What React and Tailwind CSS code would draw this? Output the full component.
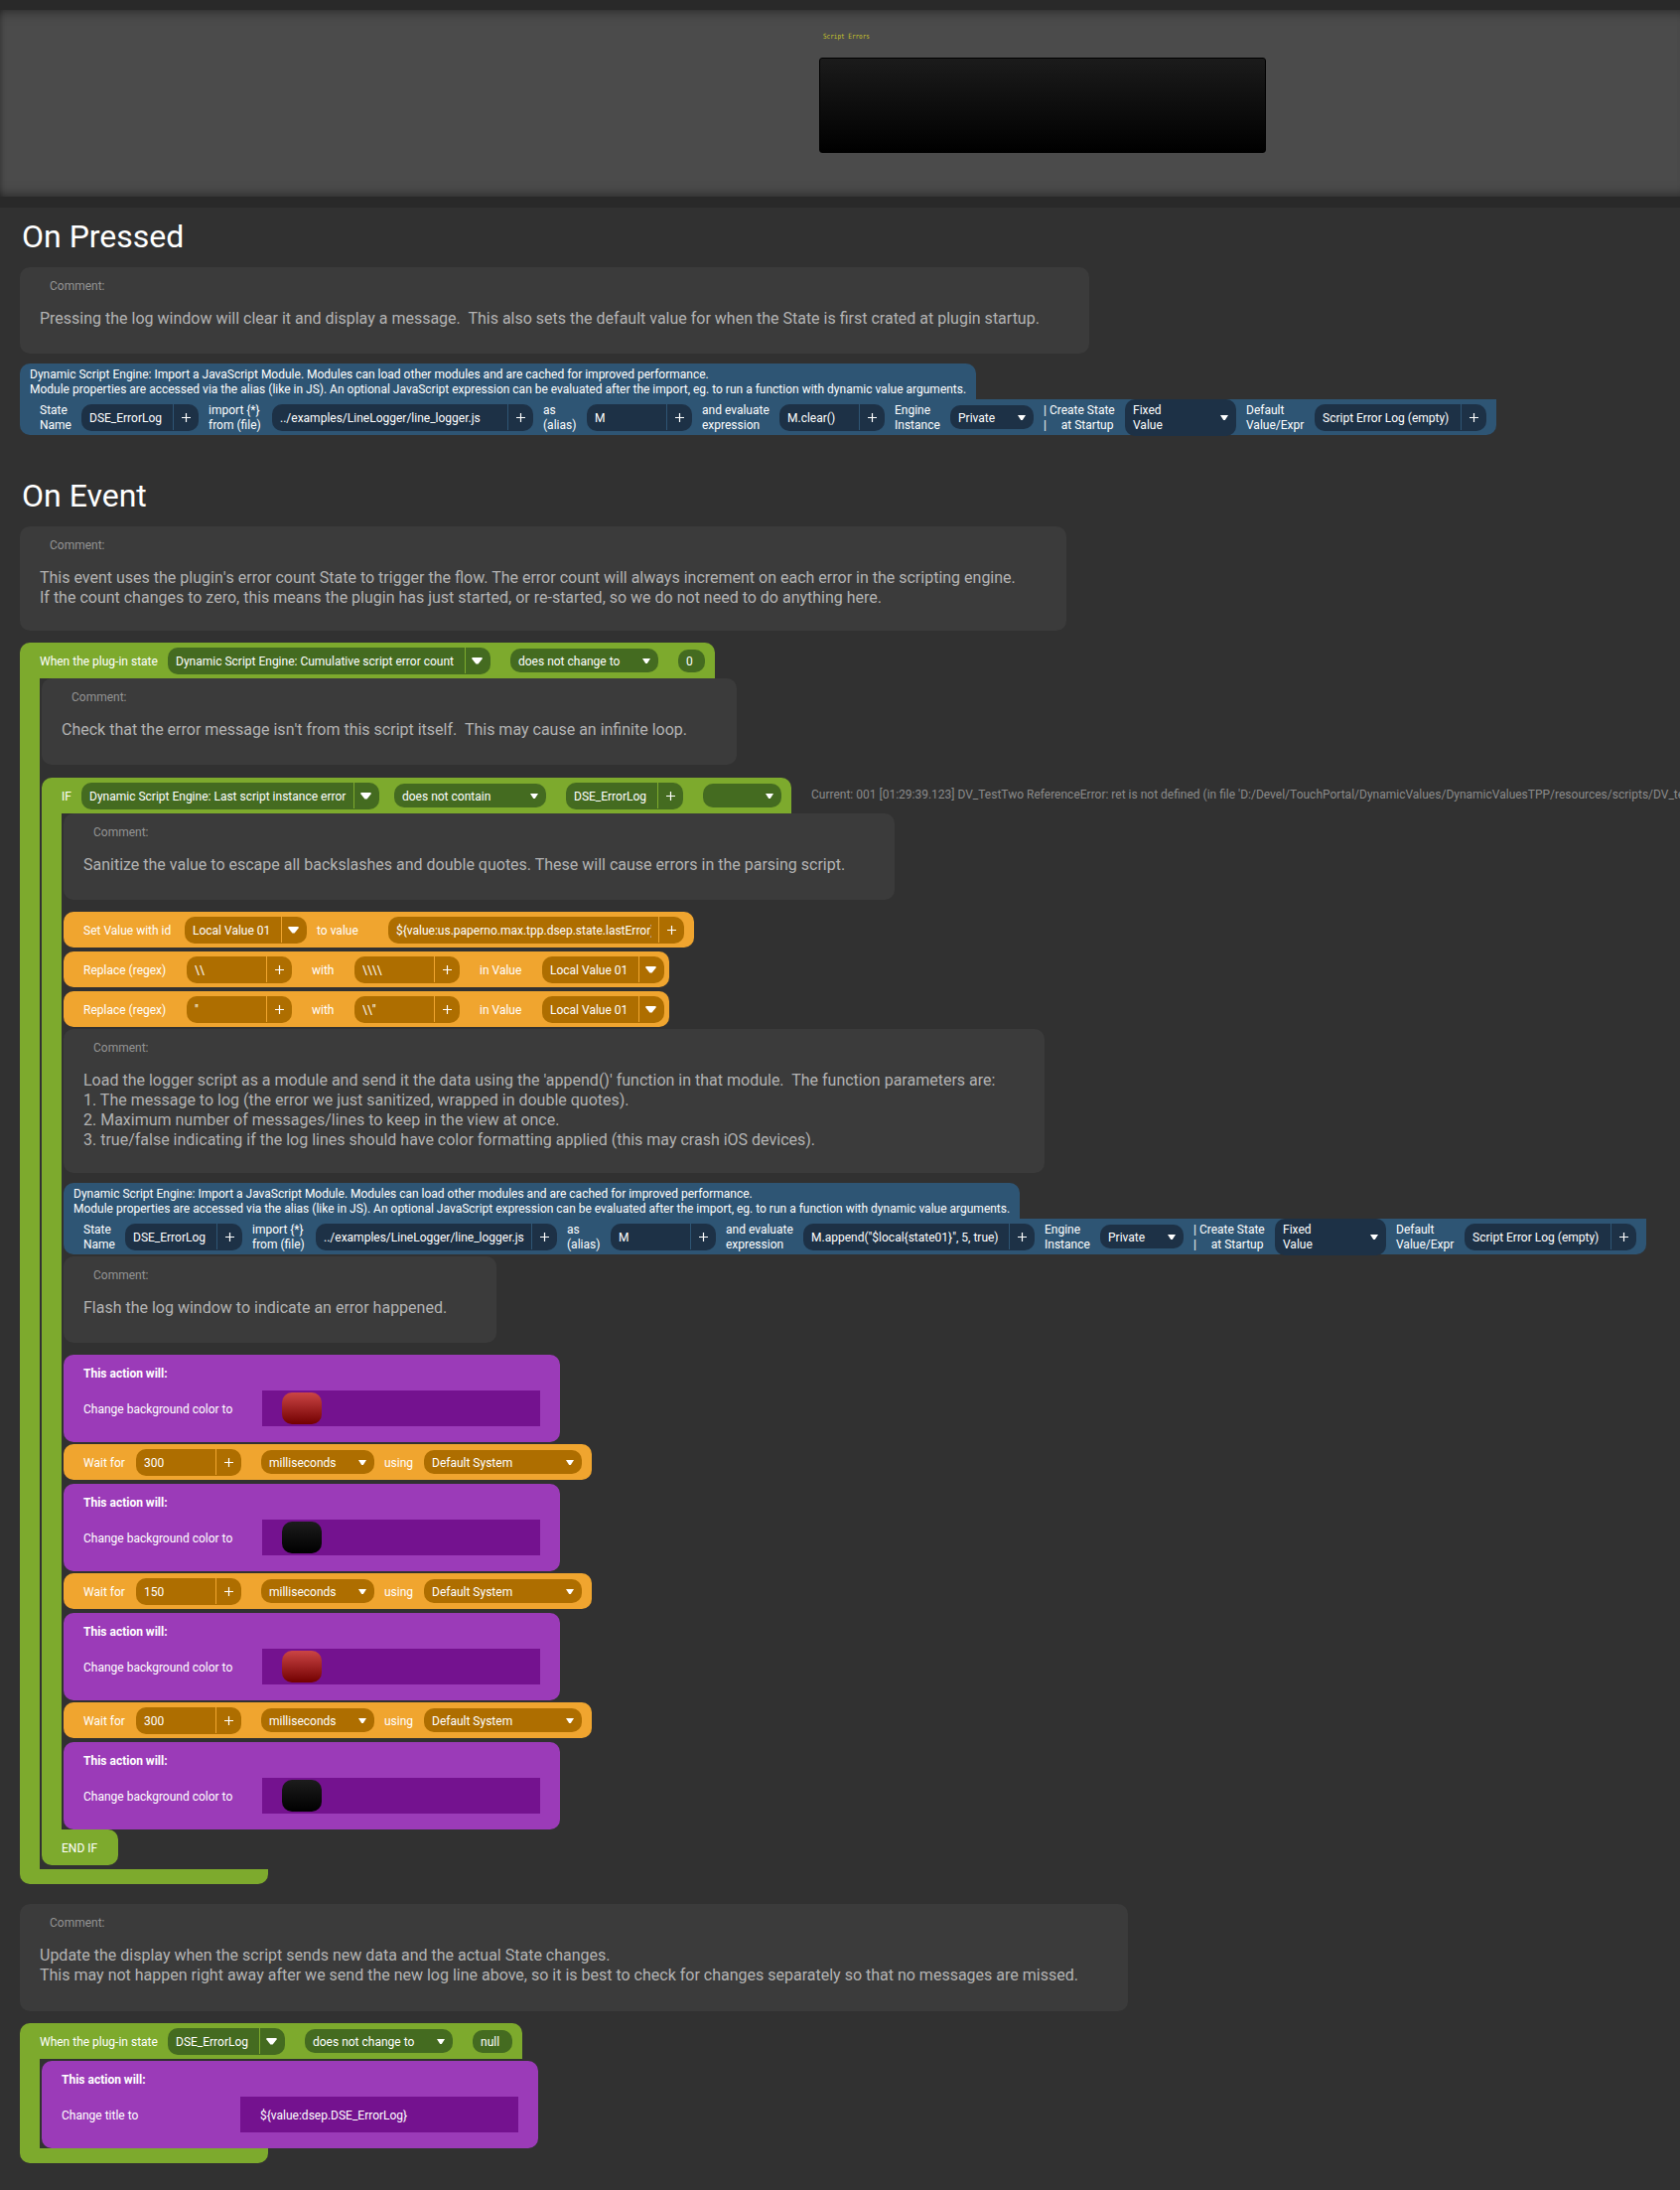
import React from "react";

const TONES = {
  blue: { block: "bg-[#2e5574]", pill: "bg-[#1d3146]", line: "bg-[#2e5574]" },
  green: { block: "bg-[#7daa2d]", pill: "bg-[#446b20]", line: "bg-[#7daa2d]" },
  orange: { block: "bg-[#f0a52f]", pill: "bg-[#ae6e00]", line: "bg-[#f0a52f]" },
};

function Arrow({ big }) {
  return big ? (
    <svg className="mr-0.5 block h-[7px] w-[11px]" viewBox="0 0 11 7"><path d="M.8 0h9.4l.8.9L6.6 6.6H4.4L0 .9z" fill="#fff" /></svg>
  ) : (
    <svg className="block h-[5px] w-2" viewBox="0 0 8 5"><path d="M0 0h8L4.8 5H3.2z" fill="#fff" /></svg>
  );
}

function Plus() {
  return (
    <svg className="block h-[9px] w-[9px]" viewBox="0 0 9 9"><path d="M4.5 0v9M0 4.5h9" stroke="#fff" strokeWidth="1.2" /></svg>
  );
}

/* Text field with a divider and a trailing "+" or list arrow */
function Field({ tone, w, ml = 0, icon = "plus", children }) {
  const t = TONES[tone];
  return (
    <div className={`flex h-[27px] shrink-0 items-center rounded-[10px] pl-2 ${t.pill}`} style={{ width: w, marginLeft: ml }}>
      <div className="mr-[7px] min-w-0 flex-1 overflow-hidden whitespace-pre pt-0.5">{children}</div>
      <div className={`h-[26px] w-px ${t.line}`} />
      <div className="flex w-[25px] justify-center">{icon === "plus" ? <Plus /> : <Arrow big />}</div>
    </div>
  );
}

function Select({ tone, w, ml = 0, tall, children }) {
  const t = TONES[tone];
  return (
    <div
      className={`flex shrink-0 items-center justify-between rounded-[10px] px-2 ${t.pill} ${tall ? "h-[37px] leading-[15px]" : "h-6"}`}
      style={{ width: w, marginLeft: ml }}
    >
      <div className="whitespace-pre pt-0.5">{children}</div>
      <Arrow />
    </div>
  );
}

function Value({ w, ml = 0, children }) {
  return (
    <div className="flex h-[23px] shrink-0 items-center rounded-[10px] bg-[#446b20] pl-2 pt-0.5" style={{ width: w, marginLeft: ml }}>
      {children}
    </div>
  );
}

function Label({ w, ml = 0, children }) {
  return <div className="shrink-0 whitespace-pre pt-0.5 leading-[15px]" style={{ width: w, marginLeft: ml }}>{children}</div>;
}

function Comment({ w, h = 87, mt = 0, children }) {
  return (
    <div className="rounded-[10px] bg-[#3b3b3b] pl-5 pt-3" style={{ width: w, height: h, marginTop: mt }}>
      <div className="ml-[10px] h-[30px] leading-[15px] text-[#949494]">Comment:</div>
      <div className="whitespace-pre text-[16px] leading-5 text-[#b3b3b3]">{children}</div>
    </div>
  );
}

/* Contraction set without kerning around the straight apostrophe */
function Unkerned({ children }) {
  return <span className="[font-kerning:none]">{children}</span>;
}

function ImportModule({ mt, topW, w, fileW, expr, exprW }) {
  return (
    <div style={{ marginTop: mt, width: w }}>
      <div className="h-9 whitespace-pre rounded-t-[10px] bg-[#2e5574] pl-[10px] pt-1 leading-[15px]" style={{ width: topW }}>
        {"Dynamic Script Engine: Import a JavaScript Module. Modules can load other modules and are cached for improved performance.\nModule properties are accessed via the alias (like in JS). An optional JavaScript expression can be evaluated after the import, eg. to run a function with dynamic value arguments."}
      </div>
      <div className="flex h-9 items-center rounded-b-[10px] bg-[#2e5574] pl-5">
        <Label w={42}>{"State\nName"}</Label>
        <Field tone="blue" w={118}>DSE_ErrorLog</Field>
        <Label w={54} ml={10}>{"import {*}\nfrom (file)"}</Label>
        <Field tone="blue" w={fileW} ml={10}>../examples/LineLogger/line_logger.js</Field>
        <Label w={34} ml={10}>{"as\n(alias)"}</Label>
        <Field tone="blue" w={106} ml={10}>M</Field>
        <Label w={68} ml={10}>{"and evaluate\nexpression"}</Label>
        <Field tone="blue" w={exprW} ml={10}>{expr}</Field>
        <Label w={46} ml={10}>{"Engine\nInstance"}</Label>
        <Select tone="blue" w={84} ml={10}>Private</Select>
        <Label w={72} ml={10}>{"| Create State\n|     at Startup"}</Label>
        <Select tone="blue" w={112} ml={10} tall>{"Fixed\nValue"}</Select>
        <Label w={59} ml={10}>{"Default\nValue/Expr"}</Label>
        <Field tone="blue" w={173} ml={10}>Script Error Log (empty)</Field>
      </div>
    </div>
  );
}

function Action({ mt = 0, label, children }) {
  return (
    <div className="h-[88px] w-[500px] rounded-[10px] bg-[#9b3bb8] pl-5" style={{ marginTop: mt }}>
      <div className="h-9 pt-3 font-bold leading-[15px]">This action will:</div>
      <div className="flex h-9 items-center">
        <div className="w-[180px] pt-0.5">{label}</div>
        <div className="flex h-9 w-[280px] items-center bg-[#74128f] pl-5">{children}</div>
      </div>
    </div>
  );
}

function ColorAction({ mt, red }) {
  return (
    <Action mt={mt} label="Change background color to">
      <div
        className={`h-8 w-10 rounded-[10px] ${red ? "bg-[linear-gradient(#cb4545,#720000)]" : "bg-[linear-gradient(#1c1c1c,#000000)]"}`}
      />
    </Action>
  );
}

function OrangeRow({ w, mt = 4, children }) {
  return (
    <div className="flex h-9 items-center rounded-[10px] bg-[#f0a52f] pl-5" style={{ width: w, marginTop: mt }}>
      {children}
    </div>
  );
}

function Wait({ ms }) {
  return (
    <OrangeRow w={532} mt={2}>
      <Label w={43}>Wait for</Label>
      <Field tone="orange" w={106} ml={10}>{ms}</Field>
      <Select tone="orange" w={114} ml={20}>milliseconds</Select>
      <Label w={30} ml={10}>using</Label>
      <Select tone="orange" w={159} ml={10}>Default System</Select>
    </OrangeRow>
  );
}

function Replace({ from, to }) {
  return (
    <OrangeRow w={610}>
      <Label w={104}>Replace (regex)</Label>
      <Field tone="orange" w={106}>{from}</Field>
      <Label w={23} ml={20}>with</Label>
      <Field tone="orange" w={106} ml={20}>{to}</Field>
      <Label w={43} ml={20}>in Value</Label>
      <Field tone="orange" w={123} ml={20} icon="arrow">Local Value 01</Field>
    </OrangeRow>
  );
}

export default function App() {
  return (
    <div className="h-[2205px] w-[1692px] overflow-hidden bg-[#313131] font-['Roboto',sans-serif] text-[12px] leading-[15px] text-white">
      <div className="h-[10px] bg-[#292929]" />
      <div className="h-[188px] overflow-hidden bg-[#4b4b4b] shadow-[inset_0_13px_13px_-13px_rgba(0,0,0,0.55),inset_0_-13px_13px_-13px_rgba(0,0,0,0.55),inset_6px_0_6px_-6px_rgba(0,0,0,0.35)]">
        <div className="ml-[829px] h-12 pt-[23px]">
          <div className="origin-bottom scale-y-120 font-['DejaVu_Sans_Mono',monospace] text-[6px] leading-[8px] text-[#c9c32c]">Script Errors</div>
        </div>
        <div className="ml-[825px] h-24 w-[450px] rounded-[3px] border border-black bg-[linear-gradient(#1b1b1b,#000000)]" />
      </div>
      <div className="h-[11px] bg-[#292929]" />

      <div className="pl-5">
        <h1 className="ml-0.5 h-[60px] pt-[9px] text-[32px] leading-[40px]">On Pressed</h1>
        <Comment w={1077}>{"Pressing the log window will clear it and display a message.  This also sets the default value for when the State is first crated at plugin startup."}</Comment>
        <ImportModule mt={10} topW={963} w={1487} fileW={263} expr="M.clear()" exprW={106} />

        <h1 className="ml-0.5 mt-8 h-[60px] pt-[9px] text-[32px] leading-[40px]">On Event</h1>
        <Comment w={1054} h={105}>
          {"This event uses the plugi"}<Unkerned>n's</Unkerned>{" error count State to trigger the flow. The error count will always increment on each error in the scripting engine.\nIf the count changes to zero, this means the plugin has just started, or re-started, so we do not need to do anything here."}
        </Comment>

        <div className="mt-3">
          <div className="flex h-9 w-[700px] items-center rounded-t-[10px] bg-[#7daa2d] pl-5">
            <Label w={129}>When the plug-in state</Label>
            <Field tone="green" w={325} icon="arrow">Dynamic Script Engine: Cumulative script error count</Field>
            <Select tone="green" w={149} ml={20}>does not change to</Select>
            <Value w={27} ml={20}>0</Value>
          </div>
          <div className="flex">
            <div className="w-5 shrink-0 bg-[#7daa2d]" />
            <div className="ml-0.5 pb-1">
              <Comment w={700}>
                {"Check that the error message is"}<Unkerned>n't</Unkerned>{" from this script itself.  This may cause an infinite loop."}
              </Comment>
              <div className="mt-[13px] flex items-center">
                <div className="flex h-9 w-[755px] shrink-0 items-center rounded-t-[10px] bg-[#7daa2d] pl-5">
                  <Label w={20}>IF</Label>
                  <Field tone="green" w={300} icon="arrow">Dynamic Script Engine: Last script instance error</Field>
                  <Select tone="green" w={153} ml={15}>does not contain</Select>
                  <Field tone="green" w={118} ml={20}>DSE_ErrorLog</Field>
                  <Select tone="green" w={79} ml={20}>{" "}</Select>
                </div>
                <div className="mb-px ml-5 w-[875px] overflow-hidden whitespace-pre text-[#8b8b8b]">
                  Current: 001 [01:29:39.123] DV_TestTwo ReferenceError: ret is not defined (in file 'D:/Devel/TouchPortal/DynamicValues/DynamicValuesTPP/resources/scripts/DV_test.js'
                </div>
              </div>
              <div className="flex">
                <div className="w-5 shrink-0 bg-[#7daa2d]" />
                <div className="ml-0.5">
                  <Comment w={837}>{"Sanitize the value to escape all backslashes and double quotes. These will cause errors in the parsing script."}</Comment>
                  <OrangeRow w={635} mt={12}>
                    <Label w={102}>Set Value with id</Label>
                    <Field tone="orange" w={123} icon="arrow">Local Value 01</Field>
                    <Label w={52} ml={10}>to value</Label>
                    <Field tone="orange" w={298} ml={20}>{"${value:us.paperno.max.tpp.dsep.state.lastError}"}</Field>
                  </OrangeRow>
                  <Replace from={"\\\\"} to={"\\\\\\\\"} />
                  <Replace from={'"'} to={'\\\\"'} />
                  <Comment w={988} h={145} mt={2}>{"Load the logger script as a module and send it the data using the 'append()' function in that module.  The function parameters are:\n1. The message to log (the error we just sanitized, wrapped in double quotes).\n2. Maximum number of messages/lines to keep in the view at once.\n3. true/false indicating if the log lines should have color formatting applied (this may crash iOS devices)."}</Comment>
                  <ImportModule mt={10} topW={963} w={1594} fileW={243} expr={'M.append("$local{state01}", 5, true)'} exprW={233} />
                  <Comment w={436} mt={2}>Flash the log window to indicate an error happened.</Comment>
                  <ColorAction mt={12} red />
                  <Wait ms="300" />
                  <ColorAction mt={4} />
                  <Wait ms="150" />
                  <ColorAction mt={4} red />
                  <Wait ms="300" />
                  <ColorAction mt={4} />
                </div>
              </div>
              <div className="flex h-9 w-[77px] items-center rounded-[10px] rounded-tl-none bg-[#7daa2d] pl-5 pt-0.5">END IF</div>
            </div>
          </div>
          <div className="h-[15px] w-[250px] rounded-b-[10px] bg-[#7daa2d]" />
        </div>

        <Comment w={1116} h={108} mt={20}>{"Update the display when the script sends new data and the actual State changes.\nThis may not happen right away after we send the new log line above, so it is best to check for changes separately so that no messages are missed."}</Comment>

        <div className="mt-3">
          <div className="flex h-9 w-[506px] items-center rounded-t-[10px] bg-[#7daa2d] pl-5">
            <Label w={129}>When the plug-in state</Label>
            <Field tone="green" w={118} icon="arrow">DSE_ErrorLog</Field>
            <Select tone="green" w={149} ml={20}>does not change to</Select>
            <Value w={40} ml={20}>null</Value>
          </div>
          <div className="flex">
            <div className="w-5 bg-[#7daa2d]" />
            <div className="ml-0.5 pt-0.5">
              <Action label="Change title to"><span className="pt-0.5">{"${value:dsep.DSE_ErrorLog}"}</span></Action>
            </div>
          </div>
          <div className="h-[15px] w-[250px] rounded-b-[10px] bg-[#7daa2d]" />
        </div>
      </div>
    </div>
  );
}
